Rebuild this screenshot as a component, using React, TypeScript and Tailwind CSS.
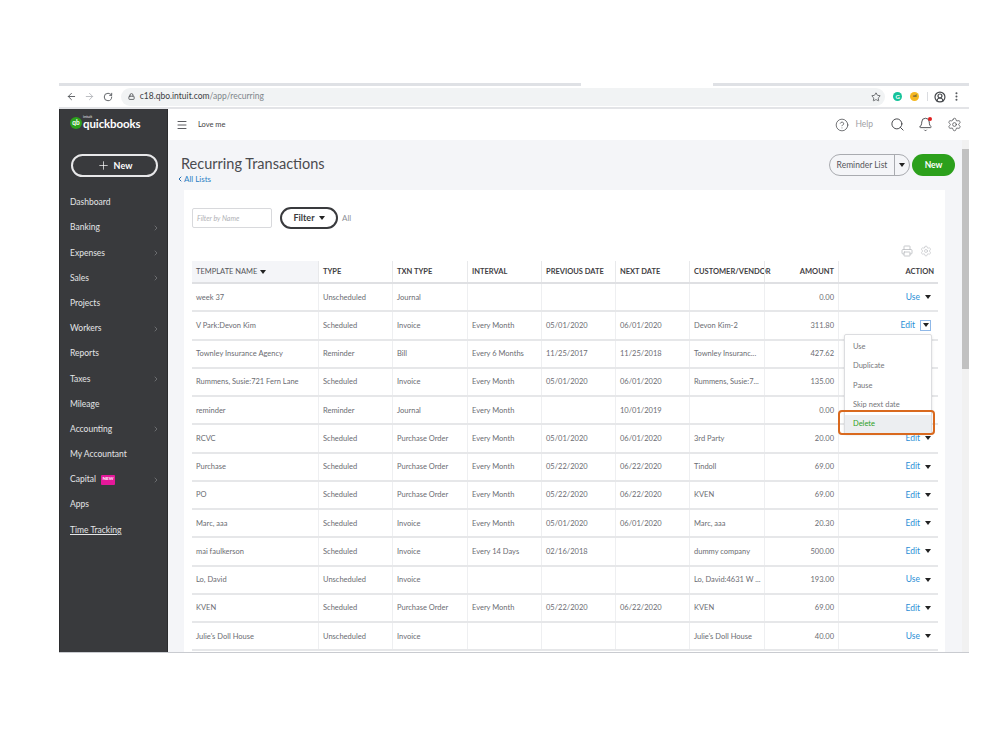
import React from 'react';
import { ArrowLeft, ArrowRight, ChevronLeft, ChevronRight, CircleHelp, Lock, Menu, MoreVertical, Plus, Printer, RotateCw, Search, Settings, Star, Bell, CircleUserRound } from 'lucide-react';

const navItems = [
  { label: 'Dashboard' },
  { label: 'Banking', arrow: true },
  { label: 'Expenses', arrow: true },
  { label: 'Sales', arrow: true },
  { label: 'Projects' },
  { label: 'Workers', arrow: true },
  { label: 'Reports' },
  { label: 'Taxes', arrow: true },
  { label: 'Mileage' },
  { label: 'Accounting', arrow: true },
  { label: 'My Accountant' },
  { label: 'Capital', arrow: true, badge: true },
  { label: 'Apps' },
  { label: 'Time Tracking', underline: true },
];

const rows = [
  ['week 37', 'Unscheduled', 'Journal', '', '', '', '', '0.00', 'Use'],
  ['V Park:Devon Kim', 'Scheduled', 'Invoice', 'Every Month', '05/01/2020', '06/01/2020', 'Devon Kim-2', '311.80', 'Edit'],
  ['Townley Insurance Agency', 'Reminder', 'Bill', 'Every 6 Months', '11/25/2017', '11/25/2018', 'Townley Insuranc...', '427.62', ''],
  ['Rummens, Susie:721 Fern Lane', 'Scheduled', 'Invoice', 'Every Month', '05/01/2020', '06/01/2020', 'Rummens, Susie:7...', '135.00', ''],
  ['reminder', 'Reminder', 'Journal', 'Every Month', '', '10/01/2019', '', '0.00', ''],
  ['RCVC', 'Scheduled', 'Purchase Order', 'Every Month', '05/01/2020', '06/01/2020', '3rd Party', '20.00', 'Edit'],
  ['Purchase', 'Scheduled', 'Purchase Order', 'Every Month', '05/22/2020', '06/22/2020', 'Tindoll', '69.00', 'Edit'],
  ['PO', 'Scheduled', 'Purchase Order', 'Every Month', '05/22/2020', '06/22/2020', 'KVEN', '69.00', 'Edit'],
  ['Marc, aaa', 'Scheduled', 'Invoice', 'Every Month', '05/01/2020', '06/01/2020', 'Marc, aaa', '20.30', 'Edit'],
  ['mai faulkerson', 'Scheduled', 'Invoice', 'Every 14 Days', '02/16/2018', '', 'dummy company', '500.00', 'Edit'],
  ['Lo, David', 'Unscheduled', 'Invoice', '', '', '', 'Lo, David:4631 W ...', '193.00', 'Use'],
  ['KVEN', 'Scheduled', 'Purchase Order', 'Every Month', '05/22/2020', '06/22/2020', 'KVEN', '69.00', 'Edit'],
  ["Julie's Doll House", 'Unscheduled', 'Invoice', '', '', '', "Julie's Doll House", '40.00', 'Use'],
];

const columns = ['TYPE', 'TXN TYPE', 'INTERVAL', 'PREVIOUS DATE', 'NEXT DATE', 'CUSTOMER/VENDOR'];
const gridCols = 'grid grid-cols-[126px_74px_75px_74px_74px_74px_75px_74px_100px]';

const Caret = () => <span className="inline-block w-0 h-0 border-x-[3px] border-x-transparent border-t-[4px] border-t-[#222]" />;

const App: React.FC = () => {
  return (
    <div className="w-[999px] h-[749px] bg-white pl-[59px] pt-[83px] overflow-hidden font-['Lato',sans-serif]">
      <div className="w-[910px] h-[570px] flex flex-col overflow-hidden border-b border-[#c9cbd0]">
        {/* browser chrome */}
        <div className="h-[3px] flex justify-between shrink-0">
          <div className="w-[522px] bg-[#dfe1e5]" />
          <div className="w-[256px] bg-[#dfe1e5]" />
        </div>
        <div className="h-[23px] shrink-0 flex items-center border-b-2 border-[#e3e4e7] pl-[7px] pr-[7px] text-[#5f6368]">
          <ArrowLeft size={11} strokeWidth={2} className="text-[#55585c]" />
          <ArrowRight size={11} strokeWidth={2} className="ml-[7px] text-[#b5b8bc]" />
          <RotateCw size={10} strokeWidth={2.2} className="ml-[8px] text-[#55585c]" />
          <div className="ml-[8px] w-[769px] h-[18px] rounded-full bg-[#f1f3f4] flex items-center pl-[7px] pr-[4px]">
            <Lock size={7} strokeWidth={3} className="text-[#55585c]" />
            <span className="ml-[5px] text-[8.5px] text-[#3c4043]">c18.qbo.intuit.com<span className="text-[#80868b]">/app/recurring</span></span>
            <Star size={10} className="ml-auto text-[#55585c]" />
          </div>
          <span className="ml-[8px] w-[9px] h-[9px] rounded-full bg-[#15c39a] text-white text-[6px] font-bold flex items-center justify-center">G</span>
          <span className="ml-[8px] w-[9px] h-[9px] rounded-full bg-[#f5b820] text-[#444] text-[3.5px] font-bold flex items-center justify-center">ad</span>
          <span className="ml-[8px] w-px h-[9px] bg-[#dadce0]" />
          <CircleUserRound size={12} strokeWidth={2.4} className="ml-[6px] text-[#44474b]" />
          <MoreVertical size={11} strokeWidth={2.5} className="ml-[5px] text-[#55585c]" />
        </div>

        <div className="flex-1 flex min-h-0">
          {/* sidebar */}
          <aside className="w-[109px] shrink-0 bg-[#393a3d] border-x border-[#2b2c2e] text-[#e4e5e7]">
            <div className="h-[30px] pl-[10px] pt-[7px] flex items-start">
              <span className="w-[12px] h-[12px] mt-[1px] rounded-full bg-[#2ca01c] text-white text-[6.5px] font-bold flex items-center justify-center">qb</span>
              <div className="ml-[1px] -mt-[1px] flex flex-col leading-none">
                <span className="text-[4px] text-[#e4e5e7]">intuit</span>
                <span className="text-[11.5px] font-bold text-white -mt-[1px] tracking-[-0.1px]">quickbooks</span>
              </div>
            </div>
            <div className="mt-[15px] ml-[11px] w-[87px] h-[23px] rounded-full border-2 border-[#e8e8ea] flex items-center justify-center gap-[4px] text-[9px] font-bold text-white">
              <Plus size={13} strokeWidth={1.3} />
              <span>New</span>
            </div>
            <nav className="mt-[13px] flex flex-col">
              {navItems.map((item) => (
                <div key={item.label} className="h-[25.2px] pl-[10px] pr-[7px] flex items-center text-[8.5px]">
                  <span className={item.underline ? 'underline' : ''}>{item.label}</span>
                  {item.badge && <span className="ml-[5px] w-[14px] h-[10px] rounded-[1px] bg-[#e5189a] text-white text-[4.5px] font-bold flex items-center justify-center">NEW</span>}
                  {item.arrow && <ChevronRight size={8} className="ml-auto text-[#85868a]" />}
                </div>
              ))}
            </nav>
          </aside>

          <div className="flex-1 flex flex-col min-w-0">
            {/* top header */}
            <header className="h-[31px] shrink-0 bg-white flex items-center pl-[8px] pr-[7px] text-[#4a4b4f]">
              <Menu size={12} strokeWidth={1.8} />
              <span className="ml-[10px] text-[7.5px] text-[#444]">Love me</span>
              <CircleHelp size={14} strokeWidth={1.3} className="ml-auto" />
              <span className="ml-[6px] text-[8.5px] text-[#a0a1a5]">Help</span>
              <Search size={15} strokeWidth={1.6} className="ml-[17px]" />
              <div className="relative ml-[13px]">
                <Bell size={15} strokeWidth={1.5} />
                <span className="absolute right-[1px] top-[0px] w-[4px] h-[4px] rounded-full bg-[#e02020]" />
              </div>
              <Settings size={15} strokeWidth={1.2} className="ml-[14px]" />
            </header>

            <div className="flex-1 flex min-h-0 bg-[#f4f5f8]">
              <main className="flex-1 min-w-0 pl-[16px] overflow-hidden">
                {/* title row */}
                <div className="h-[50px] flex pt-[14px] pr-[7px]">
                  <div className="-ml-[3px]">
                    <h1 className="text-[14.5px] leading-[20px] text-[#4a4b4f]">Recurring Transactions</h1>
                    <div className="-ml-[5px] flex items-center text-[8px] leading-[10px] text-[#2a7fc4]">
                      <ChevronLeft size={8} strokeWidth={3} className="text-[#2a6fb0]" />
                      <span>All Lists</span>
                    </div>
                  </div>
                  <div className="ml-auto flex">
                    <div className="w-[81px] h-[22px] rounded-full border border-[#a9abb0] flex items-center text-[8.5px] text-[#55565a] bg-[#f4f5f8]">
                      <span className="w-[65px] text-center border-r border-[#a9abb0] leading-[20px]">Reminder List</span>
                      <span className="flex-1 flex justify-center"><Caret /></span>
                    </div>
                    <div className="ml-[2px] w-[43px] h-[22px] rounded-full bg-[#2ca01c] text-white text-[8.5px] font-bold flex items-center justify-center">New</div>
                  </div>
                </div>

                {/* card */}
                <section className="relative w-[761px] h-[463px] bg-white pl-[8px] pt-[17px]">
                  <div className="flex items-center h-[22px]">
                    <div className="w-[80px] h-[20px] border border-[#d8d9dc] rounded-[2px] flex items-center pl-[4px] text-[7px] italic text-[#b0b1b5]">Filter by Name</div>
                    <div className="ml-[8px] w-[58px] h-[22px] rounded-full border-2 border-[#393a3d] flex items-center justify-center gap-[4px] text-[9px] font-bold text-[#393a3d]">
                      <span>Filter</span>
                      <Caret />
                    </div>
                    <span className="ml-[4px] text-[8px] text-[#8d9096]">All</span>
                  </div>
                  <div className="mt-[16px] h-[17px] w-[745px] flex justify-end gap-[7px] pr-[5px] text-[#b9bbbf]">
                    <Printer size={12} strokeWidth={1.6} />
                    <Settings size={12} strokeWidth={1.2} />
                  </div>

                  {/* table header */}
                  <div className={`${gridCols} mt-[-1px] w-[746px] h-[23px] border-b-2 border-[#dfe0e3] text-[7.5px] font-bold text-[#3f4044]`}>
                    <div className="bg-[#f4f5f8] pl-[4px] flex items-center gap-[3px] font-normal text-[#55565a]">TEMPLATE NAME <Caret /></div>
                    {columns.map((c) => (
                      <div key={c} className="border-l border-[#e8e9eb] pl-[4px] flex items-center whitespace-nowrap">{c}</div>
                    ))}
                    <div className="border-l border-[#e8e9eb] pr-[4px] flex items-center justify-end">AMOUNT</div>
                    <div className="border-l border-[#e8e9eb] pr-[4px] flex items-center justify-end">ACTION</div>
                  </div>

                  {/* table rows */}
                  {rows.map((row) => (
                    <div key={row[0]} className={`${gridCols} w-[746px] h-[28.25px] border-b-2 border-[#e6e7e9] text-[7.5px] text-[#6b6c72]`}>
                      {row.slice(0, 7).map((cell, i) => (
                        <div key={i} className={`${i > 0 ? 'border-l border-[#eeeff1]' : ''} pl-[4px] flex items-center whitespace-nowrap overflow-hidden`}>{cell}</div>
                      ))}
                      <div className="border-l border-[#eeeff1] pr-[4px] flex items-center justify-end">{row[7]}</div>
                      <div className="border-l border-[#eeeff1] pr-[7px] flex items-center justify-end gap-[5px]">
                        {row[8] && <span className="text-[8.5px] text-[#2a8fd6]">{row[8]}</span>}
                        {row[8] === 'Edit' && row[0].startsWith('V Park') ? (
                          <span className="w-[11px] h-[11px] border border-[#8fb8e8] flex items-center justify-center"><Caret /></span>
                        ) : row[8] ? <Caret /> : null}
                      </div>
                    </div>
                  ))}

                  {/* action dropdown */}
                  <div className="absolute left-[660px] top-[144px] w-[88px] h-[100px] bg-white border border-[#dcdde0] rounded-[2px] shadow-sm text-[7.5px] text-[#75767a] flex flex-col">
                    {['Use', 'Duplicate', 'Pause', 'Skip next date'].map((m) => (
                      <div key={m} className="h-[19.4px] pl-[8px] flex items-center first:mt-[2px]">{m}</div>
                    ))}
                    <div className="flex-1 bg-[#eceef1] pl-[8px] flex items-center text-[#2ca01c]">Delete</div>
                  </div>
                  <div className="absolute left-[654px] top-[220px] w-[97px] h-[25px] rounded-[4px] border-2 border-[#d9691e]" />
                </section>
              </main>

              {/* page scrollbar */}
              <div className="w-[7px] shrink-0 bg-[#f1f1f1] flex flex-col mr-0">
                <div className="h-[9px]" />
                <div className="h-[220px] bg-[#c1c1c1]" />
              </div>
            </div>
          </div>
        </div>
      </div>
    </div>
  );
};

export default App;
